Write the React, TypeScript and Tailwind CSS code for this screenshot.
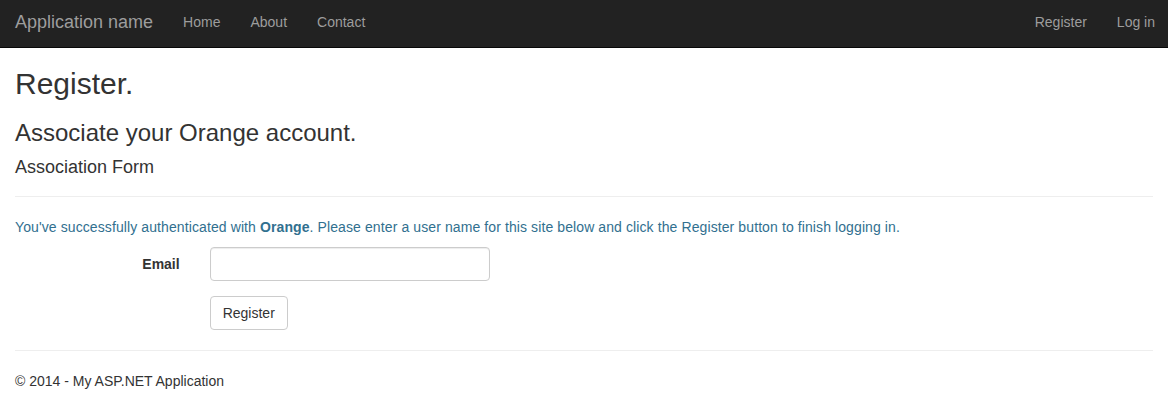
export default function App() {
  const font = { fontFamily: '"Liberation Sans", Arial, sans-serif' };
  return (
    <div className="min-h-[409px] bg-white text-[14px] leading-[20px] text-[#333] overflow-hidden" style={font}>
      <nav className="h-[48px] bg-[#222] border-b border-[#080808] flex items-start overflow-hidden">
        <a className="px-[15px] pt-[12px] text-[18px] leading-[20px] text-[#9d9d9d]">Application name</a>
        <ul className="flex">
          {["Home", "About", "Contact"].map((t) => (
            <li key={t} className="px-[15px] pt-[12px] text-[#9d9d9d]">{t}</li>
          ))}
        </ul>
        <ul className="flex ml-auto -mr-[2px]">
          {["Register", "Log in"].map((t) => (
            <li key={t} className="px-[15px] pt-[12px] text-[#9d9d9d]">{t}</li>
          ))}
        </ul>
      </nav>
      <div className="px-[15px]">
        <h2 className="mt-[19px] mb-[10px] text-[30px] leading-[33px] font-normal">Register.</h2>
        <h3 className="mt-[20px] mb-[10px] text-[24px] leading-[26.4px] font-normal">Associate your Orange account.</h3>
        <h4 className="mt-[12px] mb-[10px] text-[18px] leading-[19.8px] font-normal">Association Form</h4>
        <hr className="mt-[18px] mb-[20px] border-0 border-t border-[#eee]" />
        <p className="mb-[10px] text-[#31708f] tracking-[0.1px]">
          You've successfully authenticated with <strong className="font-bold">Orange</strong>. Please enter a user name for this site below and click the Register button to finish logging in.
        </p>
        <div className="flex -mx-[15px] mb-[15px]">
          <label className="w-[16.6667%] px-[15px] pt-[7px] text-right font-bold">Email</label>
          <div className="px-[15px] flex-1">
            <input
              className="block w-[280px] h-[34px] px-[12px] py-[6px] border border-[#ccc] rounded-[4px] shadow-[inset_0_1px_1px_rgba(0,0,0,0.075)] bg-white"
              style={font}
            />
          </div>
        </div>
        <div className="flex -mx-[15px] mb-[20px]">
          <div className="w-[16.6667%]" />
          <div className="px-[15px] flex-1">
            <button
              className="h-[34px] px-[12px] py-[6px] border border-[#ccc] rounded-[4px] bg-white text-[#333] text-[14px] leading-[20px]"
              style={font}
            >
              Register
            </button>
          </div>
        </div>
        <hr className="mb-[20px] border-0 border-t border-[#eee]" />
        <footer>
          <p>© 2014 - My ASP.NET Application</p>
        </footer>
      </div>
    </div>
  );
}
